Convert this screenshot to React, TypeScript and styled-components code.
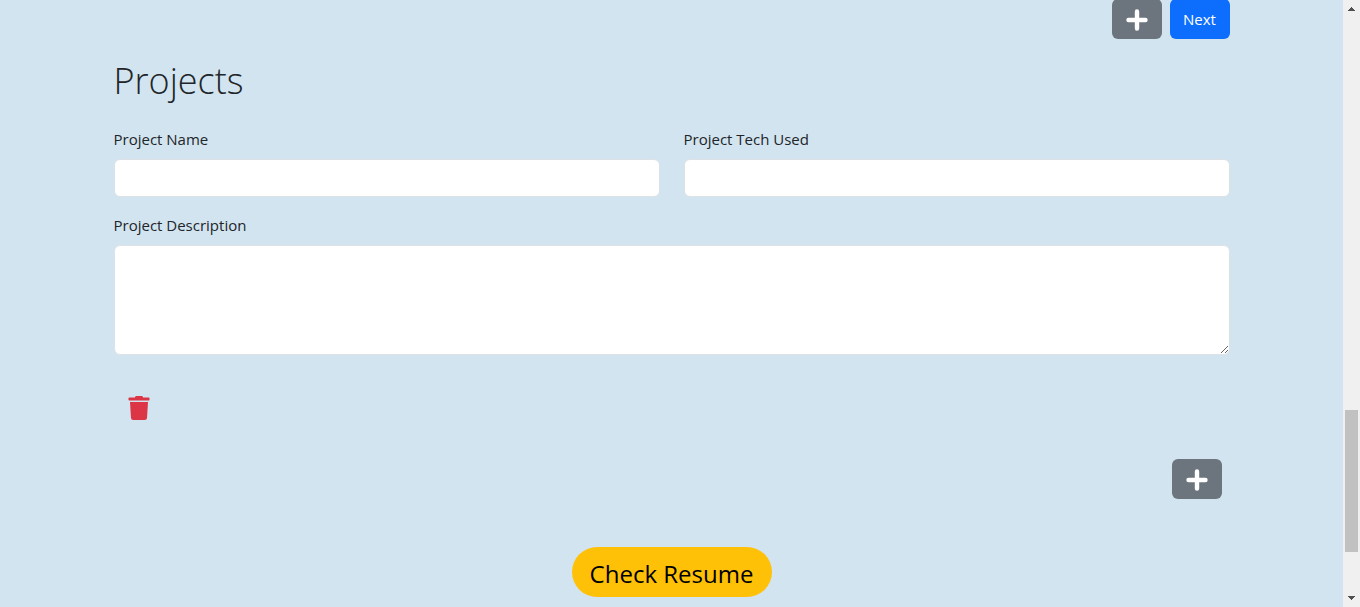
import React from "react";
import styled, { createGlobalStyle } from "styled-components";
import { FaTrash } from "react-icons/fa";

const GlobalStyle = createGlobalStyle`
  *, *::before, *::after { box-sizing: border-box; }
  body {
    margin: 0;
    color: #212529;
    background: #d2e4ef;
    font-family: "Segoe UI", "Open Sans", "Noto Sans", sans-serif;
    font-size: 15px;
    line-height: 24px;
  }
`;

const Page = styled.div`
  display: flex;
  min-height: 100vh;
`;

const Main = styled.main`
  flex: 1;
  overflow: hidden;
`;

const Container = styled.div`
  max-width: 1140px;
  margin: 0 auto;
  padding: 0 12px 10px;
`;

const Actions = styled.div<{ $inset?: boolean }>`
  display: flex;
  justify-content: flex-end;
  gap: 8px;
  padding-right: ${(p) => (p.$inset ? "8px" : "0")};
`;

const TopActions = styled(Actions)`
  margin-top: -1px;
`;

const Button = styled.button<{ $variant: "secondary" | "primary" }>`
  display: flex;
  align-items: center;
  justify-content: center;
  min-width: ${(p) => (p.$variant === "primary" ? "60px" : "50px")};
  height: 40px;
  padding: 0 13px;
  border: 0;
  border-radius: 6px;
  color: #fff;
  background: ${(p) => (p.$variant === "primary" ? "#0d6efd" : "#6c757d")};
  font: inherit;
  cursor: pointer;
`;

const Title = styled.h1`
  margin: 18px 0 22px;
  font-size: 36px;
  font-weight: 300;
  line-height: 48px;
`;

const Fields = styled.div`
  display: grid;
  grid-template-columns: 1fr 1fr;
  gap: 16px 24px;
`;

const Field = styled.div<{ $wide?: boolean }>`
  display: flex;
  flex-direction: column;
  gap: 8px;
  grid-column: ${(p) => (p.$wide ? "1 / -1" : "auto")};
`;

const Input = styled.input`
  width: 100%;
  height: 38px;
  padding: 6px 12px;
  border: 1px solid #dee2e6;
  border-radius: 6px;
  background: #fff;
  font: inherit;
`;

const TextArea = styled.textarea`
  display: block;
  width: 100%;
  height: 110px;
  padding: 6px 12px;
  border: 1px solid #dee2e6;
  border-radius: 6px;
  background: #fff;
  font: inherit;
  resize: vertical;
`;

const DeleteButton = styled.button`
  display: flex;
  margin: 34px 0 32px;
  padding: 7px 13px;
  border: 0;
  color: #dc3545;
  background: transparent;
  cursor: pointer;
`;

const CheckButton = styled.button`
  display: block;
  width: 200px;
  height: 50px;
  margin: 48px auto 0;
  padding: 4px 0 0;
  border: 0;
  border-radius: 25px;
  color: #000;
  background: #ffc107;
  font: inherit;
  font-size: 24px;
  cursor: pointer;
`;

const ScrollRail = styled.div`
  display: flex;
  flex-direction: column;
  align-items: center;
  width: 17px;
  height: 100vh;
  padding: 7px 0;
  background: #f0f0f0;
  color: #505050;
`;

const ScrollTrack = styled.div`
  display: flex;
  flex: 1;
  flex-direction: column;
  padding: 6px 0;
`;

const ScrollSpace = styled.div<{ $grow: number }>`
  flex: ${(p) => p.$grow} 1 0;
`;

const ScrollThumb = styled.div`
  flex: 142 1 0;
  width: 13px;
  background: #c1c1c1;
`;

const PlusIcon = () => (
  <svg width="24" height="24" viewBox="0 0 24 24" fill="none" stroke="currentColor" strokeWidth="4.4" strokeLinecap="round">
    <path d="M3.5 13h17M12 4.5v17" />
  </svg>
);

const Arrow = ({ down = false }: { down?: boolean }) => (
  <svg width="7" height="4" viewBox="0 0 7 4" fill="currentColor" shapeRendering="crispEdges">
    <path d={down ? "M0 0h7v1H6v1H5v1H4v1H3V3H2V2H1V1H0z" : "M3 0h1v1h1v1h1v1h1v1H0V3h1V2h1V1h1z"} />
  </svg>
);

export default function App() {
  return (
    <>
      <GlobalStyle />
      <Page>
        <Main>
          <Container>
            <TopActions>
              <Button type="button" $variant="secondary" aria-label="Add entry">
                <PlusIcon />
              </Button>
              <Button type="button" $variant="primary">Next</Button>
            </TopActions>
            <Title>Projects</Title>
            <Fields>
              <Field>
                <label htmlFor="name">Project Name</label>
                <Input id="name" type="text" />
              </Field>
              <Field>
                <label htmlFor="tech">Project Tech Used</label>
                <Input id="tech" type="text" />
              </Field>
              <Field $wide>
                <label htmlFor="description">Project Description</label>
                <TextArea id="description" />
              </Field>
            </Fields>
            <DeleteButton type="button" aria-label="Delete project">
              <FaTrash size={24} />
            </DeleteButton>
            <Actions $inset>
              <Button type="button" $variant="secondary" aria-label="Add project">
                <PlusIcon />
              </Button>
            </Actions>
            <CheckButton type="button">Check Resume</CheckButton>
          </Container>
        </Main>
        <ScrollRail aria-hidden="true">
          <Arrow />
          <ScrollTrack>
            <ScrollSpace $grow={393} />
            <ScrollThumb />
            <ScrollSpace $grow={38} />
          </ScrollTrack>
          <Arrow down />
        </ScrollRail>
      </Page>
    </>
  );
}
